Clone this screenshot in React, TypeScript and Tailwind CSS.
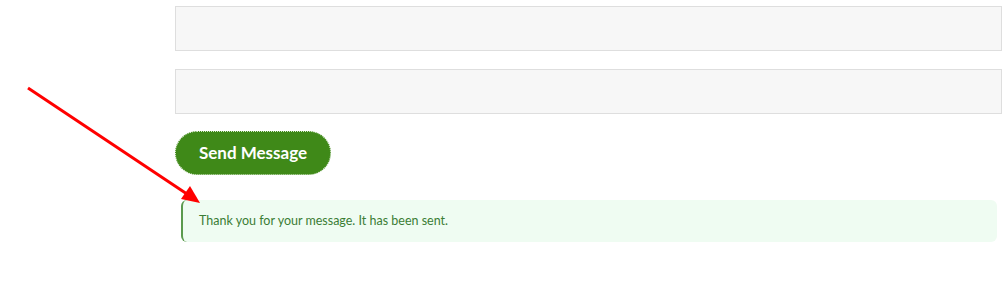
export default function App() {
  return (
    <div className="relative h-[283px] w-[1004px] bg-white" style={{ fontFamily: 'Lato, "Open Sans", sans-serif' }}>
      <div className="flex w-[827px] flex-col pl-0 pt-[6px] ml-[175px]">
        <input className="h-[45px] w-full border border-[#dedede] bg-[#f7f7f7] outline-none" />
        <input className="mt-[18px] h-[45px] w-full border border-[#dedede] bg-[#f7f7f7] outline-none" />
        <div className="mt-[17px]">
          <button className="h-[44px] w-[156px] rounded-full border border-dotted border-[#d9ead0] bg-[#3f8918] text-[17px] font-bold text-white">
            Send Message
          </button>
        </div>
        <div className="ml-[6px] mt-[25px] flex h-[42px] w-[816px] items-center rounded-[6px] border-l-2 border-[#5b9a4e] bg-[#effcf2] pl-[16px] text-[12.5px] text-[#3b7d35]">
          Thank you for your message. It has been sent.
        </div>
      </div>
      <svg className="absolute left-0 top-0" width="220" height="220" viewBox="0 0 220 220">
        <line x1="28" y1="88" x2="190" y2="196" stroke="#ff0000" strokeWidth="3" />
        <polygon points="200,203 181,199 190,186" fill="#ff0000" />
      </svg>
    </div>
  )
}
